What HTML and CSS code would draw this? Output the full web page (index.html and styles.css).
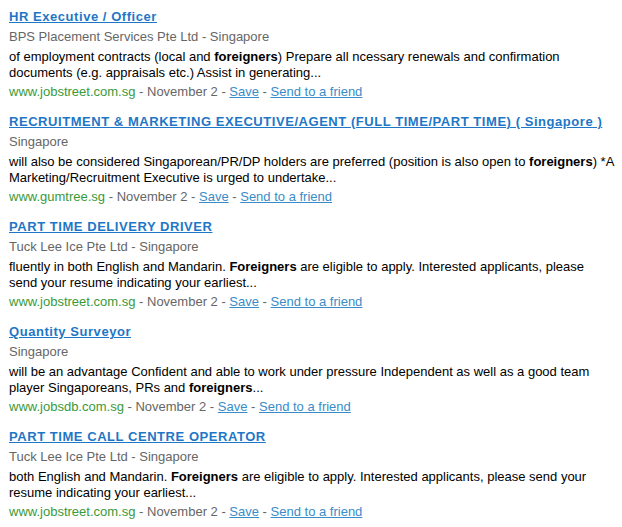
FILE: index.html
```html
<!DOCTYPE html>
<html lang="en">
<head>
    <meta charset="UTF-8">
    <title>Job results</title>
    <link rel="stylesheet" href="styles.css">
</head>
<body>
    <div id="resultados">

        <div class="vaga">
            <a class="titulo" href="#">HR Executive / Officer</a>
            <div class="empresa">BPS Placement Services Pte Ltd - Singapore</div>
            <p class="resumo">of employment contracts (local and <b>foreigners</b>) Prepare all ncessary renewals and confirmation<br>documents (e.g. appraisals etc.) Assist in generating...</p>
            <div class="rodape"><span class="site">www.jobstreet.com.sg</span> - November 2 - <a href="#">Save</a> - <a href="#">Send to a friend</a></div>
        </div>

        <div class="vaga">
            <a class="titulo" href="#">RECRUITMENT &amp; MARKETING EXECUTIVE/AGENT (FULL TIME/PART TIME) ( Singapore )</a>
            <div class="empresa">Singapore</div>
            <p class="resumo">will also be considered Singaporean/PR/DP holders are preferred (position is also open to <b>foreigners</b>) *A<br>Marketing/Recruitment Executive is urged to undertake...</p>
            <div class="rodape"><span class="site">www.gumtree.sg</span> - November 2 - <a href="#">Save</a> - <a href="#">Send to a friend</a></div>
        </div>

        <div class="vaga">
            <a class="titulo" href="#">PART TIME DELIVERY DRIVER</a>
            <div class="empresa">Tuck Lee Ice Pte Ltd - Singapore</div>
            <p class="resumo">fluently in both English and Mandarin. <b>Foreigners</b> are eligible to apply. Interested applicants, please<br>send your resume indicating your earliest...</p>
            <div class="rodape"><span class="site">www.jobstreet.com.sg</span> - November 2 - <a href="#">Save</a> - <a href="#">Send to a friend</a></div>
        </div>

        <div class="vaga">
            <a class="titulo" href="#">Quantity Surveyor</a>
            <div class="empresa">Singapore</div>
            <p class="resumo">will be an advantage Confident and able to work under pressure Independent as well as a good team<br>player Singaporeans, PRs and <b>foreigners</b>...</p>
            <div class="rodape"><span class="site">www.jobsdb.com.sg</span> - November 2 - <a href="#">Save</a> - <a href="#">Send to a friend</a></div>
        </div>

        <div class="vaga">
            <a class="titulo" href="#">PART TIME CALL CENTRE OPERATOR</a>
            <div class="empresa">Tuck Lee Ice Pte Ltd - Singapore</div>
            <p class="resumo">both English and Mandarin. <b>Foreigners</b> are eligible to apply. Interested applicants, please send your<br>resume indicating your earliest...</p>
            <div class="rodape"><span class="site">www.jobstreet.com.sg</span> - November 2 - <a href="#">Save</a> - <a href="#">Send to a friend</a></div>
        </div>

    </div>
</body>
</html>
```
FILE: styles.css
```css
* {
    margin: 0;
    padding: 0;
    box-sizing: border-box;
}

body {
    font-family: "Liberation Sans", Arial, sans-serif;
    font-size: 13px;
    background-color: #fff;
    color: #000;
}

#resultados {
    padding: 7px 0 0 9px;
    width: 622px;
    white-space: nowrap;
}

.vaga {
    margin-bottom: 10px;
}

.titulo {
    display: block;
    line-height: 20px;
    font-weight: bold;
    letter-spacing: 0.55px;
    color: #1e77c6;
}

.empresa {
    line-height: 19px;
    color: #666;
}

.resumo {
    margin-top: 3px;
    margin-bottom: 1px;
    line-height: 16px;
}

.rodape {
    line-height: 20px;
    color: #666;
}

.rodape a {
    color: #3a8cc8;
}

.site {
    color: #3a9a3a;
}
```
